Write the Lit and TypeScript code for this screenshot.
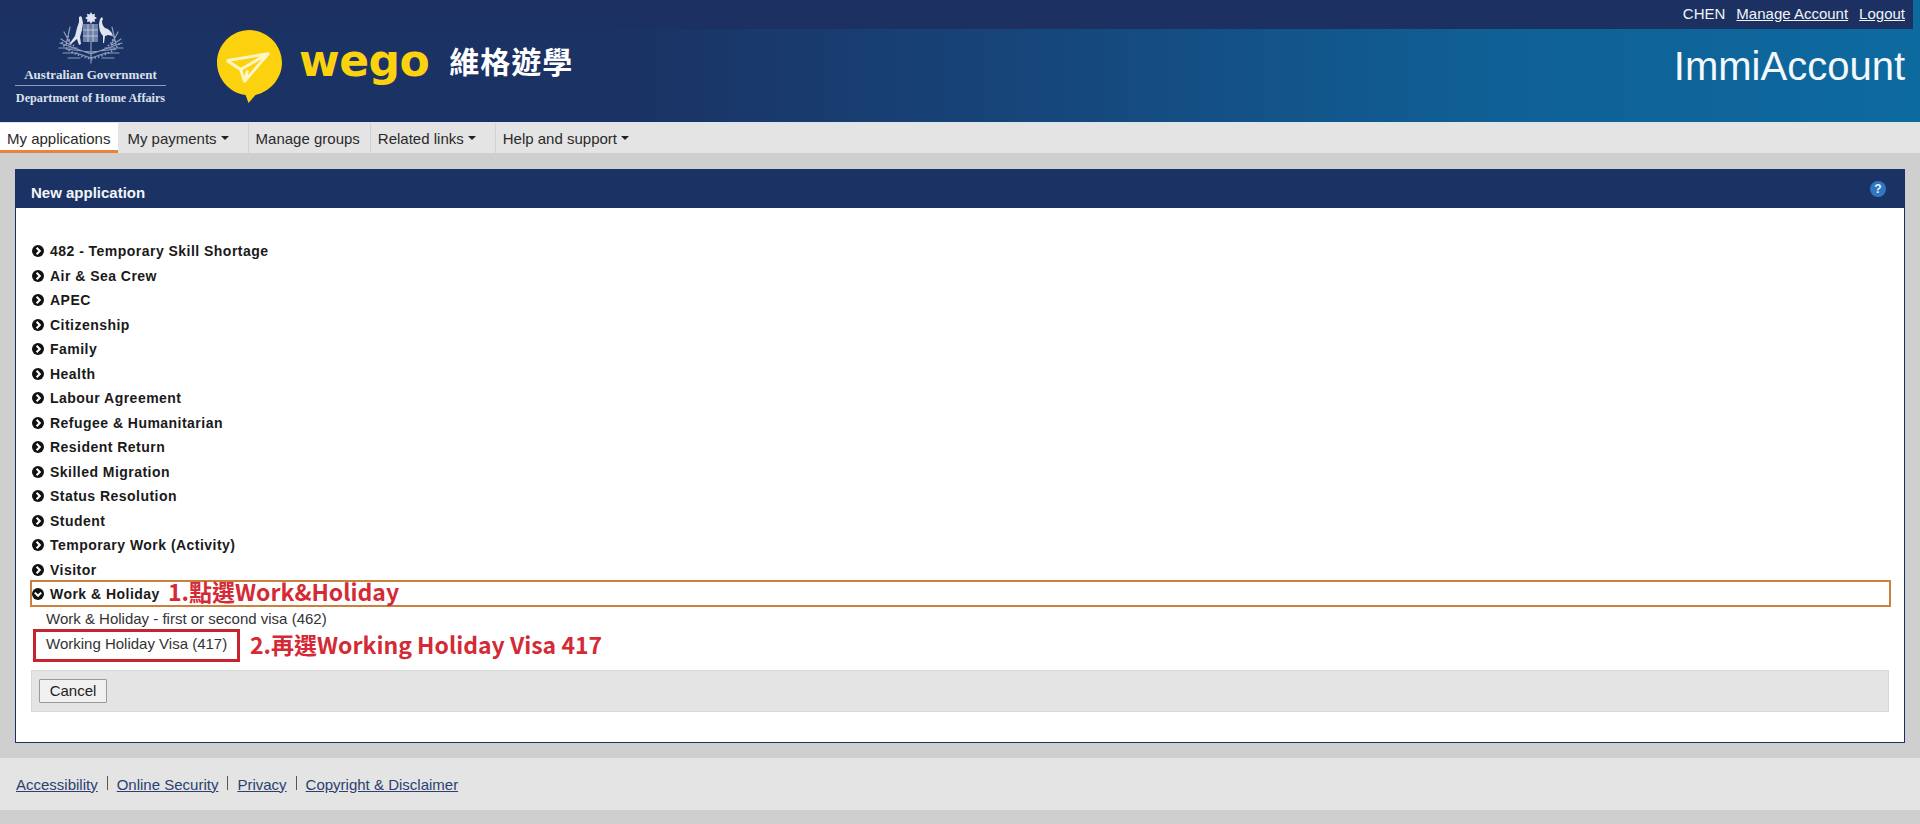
import { LitElement, html, css, svg } from "lit";
import { customElement } from "lit/decorators.js";

const CATEGORIES = [
  "482 - Temporary Skill Shortage",
  "Air & Sea Crew",
  "APEC",
  "Citizenship",
  "Family",
  "Health",
  "Labour Agreement",
  "Refugee & Humanitarian",
  "Resident Return",
  "Skilled Migration",
  "Status Resolution",
  "Student",
  "Temporary Work (Activity)",
  "Visitor",
];

const chevronRight = html`<svg class="chev" viewBox="0 0 12 12" aria-hidden="true">
  <circle cx="6" cy="6" r="6" fill="#111"></circle>
  <path d="M4.6 2.8 7.8 6 4.6 9.2" fill="none" stroke="#fff" stroke-width="2"></path>
</svg>`;

const chevronDown = html`<svg class="chev" viewBox="0 0 12 12" aria-hidden="true">
  <circle cx="6" cy="6" r="6" fill="#111"></circle>
  <path d="M2.8 4.6 6 7.8 9.2 4.6" fill="none" stroke="#fff" stroke-width="2"></path>
</svg>`;

const crest = svg`
  <g fill="none" stroke="#8d9cbd" stroke-width="1.2" stroke-linecap="round">
    <path d="M35 51V30M35 46 20 41M35 46l15-5M35 40 10 37M35 40l25-3M35 42 4 31M35 42l31-11"></path>
    <path d="M3 36h18M49 36h18M7 41h14M49 41h14M12 46h12M46 46h12M14 15l-4 18M56 15l4 18M8 20l7 13M62 20l-7 13M5 27l9 6M65 27l-9 6"></path>
  </g>
  <g stroke="#8d9cbd" stroke-width="1.8" stroke-dasharray="1.5 2" fill="none">
    <path d="M6 30c3 9 17 14 29 17 12-3 26-8 29-17"></path>
    <path d="M12 24c1 6 4 9 8 11M58 24c-1 6-4 9-8 11"></path>
  </g>
  <rect x="27" y="12" width="15" height="18" fill="#6f80a6"></rect>
  <path d="M27 18h15M27 24h15M32 12v18M37 12v18" stroke="#c9d2e4" stroke-width=".8"></path>
  <g fill="#dfe5f0">
    <path d="M35 0l1.4 2.4 2.7-.6-.6 2.7L41 6l-2.5 1.4.6 2.7-2.7-.6L35 12l-1.4-2.5-2.7.6.6-2.7L29 6l2.5-1.5-.6-2.7 2.7.6z"></path>
    <path d="M23 5l2-1 1 2 1 5-1 7-2 7 1 7-2 1-2-6-6 5-1-1 5-7 2-8 2-6z"></path>
    <path d="M44 7l2-2 1 2-1 2c0 3 1 5 3 7 4 1 7 4 8 8l-5-1-3 1-1 7h-1l0-7c-3-3-4-7-4-12z"></path>
  </g>
`;

@customElement("app-root")
export class AppRoot extends LitElement {
  static styles = css`
    :host {
      display: block;
      width: 1920px;
      height: 824px;
      overflow: hidden;
      background: #cfcfcf;
      font-family: "Liberation Sans", Arial, sans-serif;
      font-size: 15px;
      color: #222;
    }
    a { color: inherit; }

    .banner {
      height: 122px;
      display: flex;
      flex-direction: column;
      background: linear-gradient(90deg, #1b3264 0%, #1b3264 32%, #16477c 55%, #0f6096 78%, #0d6a9f 100%);
      border-bottom: 1px solid #d5e6ef;
    }
    .topbar {
      height: 29px;
      width: 1913px;
      box-sizing: border-box;
      flex: none;
      background: #1c3162;
      color: #f1f4f8;
      display: flex;
      justify-content: flex-end;
      align-items: center;
      gap: 11px;
      padding: 0 8px 3px 0;
    }
    .banner-body {
      flex: 1;
      display: flex;
      align-items: flex-start;
    }
    .gov {
      width: 151px;
      margin-left: 15px;
      flex: none;
      display: flex;
      flex-direction: column;
      align-items: center;
      margin-top: -17px;
      color: #dbe1ec;
      font-family: "Liberation Serif", serif;
      font-weight: 700;
    }
    .gov svg { width: 70px; height: 52px; margin-bottom: 4px; }
    .gov .line1 { line-height: 14px; font-size: 13px; white-space: nowrap; }
    .gov .rule { width: 100%; height: 1px; background: #8b9bbc; margin: 3px 0 5px; }
    .gov .line2 { line-height: 14px; font-size: 12.2px; white-space: nowrap; }
    .wego {
      margin-left: 51px;
      margin-top: 1px;
      display: flex;
      align-items: flex-start;
      height: 73px;
    }
    .bubble { width: 65px; height: 73px; flex: none; }
    .wego-name {
      margin-left: 17px;
      margin-top: 6px;
      font-family: "DejaVu Sans", sans-serif;
      font-weight: 700;
      font-size: 44px;
      line-height: 50px;
      letter-spacing: -0.5px;
      color: #fcd20f;
    }
    .wego-cn {
      margin-left: 20px;
      margin-top: 10px;
      font-family: "Noto Sans CJK TC", sans-serif;
      font-weight: 700;
      font-size: 30px;
      line-height: 40px;
      letter-spacing: 1px;
      color: #fff;
    }
    .product {
      margin-left: auto;
      margin-right: 15px;
      margin-top: 14px;
      font-size: 40px;
      line-height: 46px;
      color: #f4f8fb;
    }

    .nav {
      height: 30px;
      display: flex;
      background: #e4e4e4;
      color: #2a2a2a;
    }
    .nav-item {
      display: flex;
      align-items: center;
      padding: 0 10px 0 7px;
      border-right: 1px solid #d2d2d2;
      white-space: nowrap;
      gap: 4px;
    }
    .nav-item.menu { padding-right: 18px; }
    .nav-item.last { border-right: none; }
    .nav-item.active {
      background: #fff;
      border-right: none;
      border-bottom: 3px solid #e5863c;
      padding: 3px 8px 0 7px;
      height: 24px;
      margin-right: 2px;
    }
    .caret {
      width: 0;
      height: 0;
      border-left: 4.5px solid transparent;
      border-right: 4.5px solid transparent;
      border-top: 4.5px solid #222;
      margin-right: 1px;
    }

    .main {
      height: 605px;
      box-sizing: border-box;
      padding: 16px 15px 15px;
    }
    .panel {
      height: 574px;
      box-sizing: border-box;
      background: #fff;
      border: 1px solid #1b2f60;
      border-top: none;
      display: flex;
      flex-direction: column;
    }
    .panel-head {
      height: 39px;
      flex: none;
      background: #1b3264;
      color: #f2f5f9;
      font-weight: 700;
      display: flex;
      align-items: center;
      justify-content: space-between;
      padding: 7px 18px 0 15px;
      box-sizing: border-box;
    }
    .help {
      width: 16px;
      height: 16px;
      margin-top: -7px;
      border-radius: 50%;
      background: #2f78c0;
      color: #e8f2fb;
      font-size: 12px;
      font-weight: 700;
      line-height: 16px;
      text-align: center;
    }
    .panel-body { padding: 31px 15px 0 16px; position: relative; }
    .row {
      height: 24.5px;
      display: flex;
      align-items: center;
      gap: 6px;
      font-weight: 700;
      font-size: 14px;
      letter-spacing: 0.47px;
      color: #1a1a1a;
    }
    .chev { width: 12px; height: 12px; flex: none; }
    .row.open {
      height: 23px;
      box-sizing: border-box;
      outline: 2px solid #c9813f;
      margin-bottom: 1.5px;
    }
    .sub {
      height: 24.5px;
      display: flex;
      align-items: center;
      padding-left: 14px;
      color: #333;
    }
    .sub.boxed { position: relative; }
    .sub.boxed::after {
      content: "";
      position: absolute;
      left: 1px;
      top: -2px;
      width: 201px;
      height: 27px;
      border: 3px solid #c4232f;
    }
    .note {
      position: absolute;
      font-family: "Noto Sans CJK TC", sans-serif;
      font-weight: 700;
      font-size: 23px;
      line-height: 28px;
      color: #d42a35;
      white-space: nowrap;
    }
    .note.one { left: 152px; top: 369px; }
    .note.two { left: 218px; top: -1px; }
    .actions {
      margin: 14px 0 0 -1px;
      height: 42px;
      box-sizing: border-box;
      background: #e4e4e4;
      border: 1px solid #d8d8d8;
      display: flex;
      align-items: center;
      padding-left: 7px;
    }
    button {
      height: 24px;
      width: 68px;
      padding: 0;
      background: #f0f0f0;
      border: 1px solid #9a9a9a;
      border-radius: 1px;
      font: 15px "Liberation Sans", Arial, sans-serif;
      color: #222;
    }

    .footer {
      height: 52px;
      box-sizing: border-box;
      background: #e4e4e4;
      display: flex;
      align-items: center;
      padding: 0 0 0 16px;
      color: #2b3f70;
    }
    .footer .sep { width: 1px; height: 14px; background: #555; margin: 0 9px 3px 9px; }
  `;

  render() {
    return html`
      <header class="banner">
        <div class="topbar">
          <span>CHEN</span>
          <a href="#">Manage Account</a>
          <a href="#">Logout</a>
        </div>
        <div class="banner-body">
          <div class="gov">
            <svg viewBox="0 0 70 52" aria-hidden="true">${crest}</svg>
            <span class="line1">Australian Government</span>
            <span class="rule"></span>
            <span class="line2">Department of Home Affairs</span>
          </div>
          <div class="wego">
            <svg class="bubble" viewBox="0 0 66 74" aria-hidden="true">
              <path d="M33 0C51 0 66 15 66 33 66 50 53 63 39 66L32 74 29 66C13 64 0 50 0 33 0 15 15 0 33 0Z" fill="#fcd20f"></path>
              <path d="M10 31 52 24 28 52 24 40 52 24 M24 40 10 31 M24 40 28 52 31 41" fill="none" stroke="#fff6c8" stroke-width="3" stroke-linejoin="round"></path>
            </svg>
            <span class="wego-name">wego</span>
            <span class="wego-cn">維格遊學</span>
          </div>
          <div class="product">ImmiAccount</div>
        </div>
      </header>
      <nav class="nav">
        <div class="nav-item active">My applications</div>
        <div class="nav-item menu">My payments <span class="caret"></span></div>
        <div class="nav-item">Manage groups</div>
        <div class="nav-item menu">Related links <span class="caret"></span></div>
        <div class="nav-item menu last">Help and support <span class="caret"></span></div>
      </nav>
      <main class="main">
        <section class="panel">
          <div class="panel-head">
            <span>New application</span>
            <span class="help">?</span>
          </div>
          <div class="panel-body">
            ${CATEGORIES.map((c) => html`<div class="row">${chevronRight}<span>${c}</span></div>`)}
            <div class="row open">${chevronDown}<span>Work &amp; Holiday</span></div>
            <div class="note one">1.點選Work&amp;Holiday</div>
            <div class="sub">Work &amp; Holiday - first or second visa (462)</div>
            <div class="sub boxed">
              Working Holiday Visa (417)
              <div class="note two">2.再選Working Holiday Visa 417</div>
            </div>
            <div class="actions"><button>Cancel</button></div>
          </div>
        </section>
      </main>
      <footer class="footer">
        <a href="#">Accessibility</a><span class="sep"></span>
        <a href="#">Online Security</a><span class="sep"></span>
        <a href="#">Privacy</a><span class="sep"></span>
        <a href="#">Copyright &amp; Disclaimer</a>
      </footer>
    `;
  }
}
